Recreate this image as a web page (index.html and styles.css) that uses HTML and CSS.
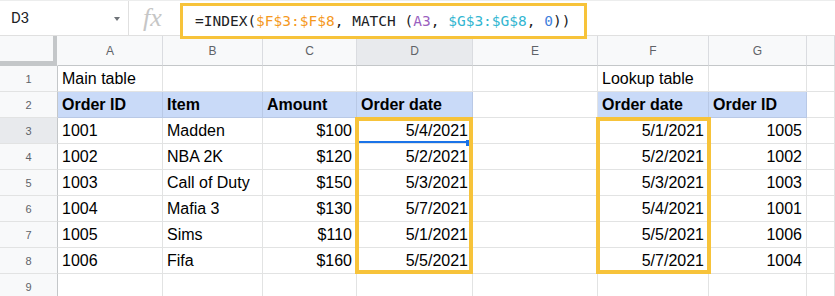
FILE: index.html
```html
<!DOCTYPE html>
<html lang="en">
<head>
  <meta charset="UTF-8" />
  <title>INDEX MATCH</title>
  <link rel="stylesheet" href="styles.css">
</head>
<body>

  <!-- formula bar -->
  <div class="formula-bar">
    <div class="name-box"><span>D3</span><span class="caret"></span></div>
    <div class="fx">fx</div>
    <div class="formula">=INDEX(<span class="ref-f">$F$3:$F$8</span>, MATCH (<span class="ref-a">A3</span>, <span class="ref-g">$G$3:$G$8</span>, <span class="num">0</span>))</div>
  </div>

  <!-- sheet -->
  <div class="sheet">
    <div class="grid">
      <div class="corner"></div>
      <div class="ch">A</div><div class="ch">B</div><div class="ch">C</div><div class="ch active">D</div>
      <div class="ch">E</div><div class="ch">F</div><div class="ch">G</div><div class="ch"></div>

      <div class="rh">1</div>
      <div class="c">Main table</div><div class="c"></div><div class="c"></div><div class="c"></div>
      <div class="c"></div><div class="c">Lookup table</div><div class="c"></div><div class="c"></div>

      <div class="rh">2</div>
      <div class="c hd">Order ID</div><div class="c hd">Item</div><div class="c hd">Amount</div><div class="c hd">Order date</div>
      <div class="c"></div><div class="c hd">Order date</div><div class="c hd">Order ID</div><div class="c"></div>

      <div class="rh active">3</div>
      <div class="c">1001</div><div class="c">Madden</div><div class="c r">$100</div><div class="c r">5/4/2021</div>
      <div class="c"></div><div class="c r">5/1/2021</div><div class="c r">1005</div><div class="c"></div>

      <div class="rh">4</div>
      <div class="c">1002</div><div class="c">NBA 2K</div><div class="c r">$120</div><div class="c r">5/2/2021</div>
      <div class="c"></div><div class="c r">5/2/2021</div><div class="c r">1002</div><div class="c"></div>

      <div class="rh">5</div>
      <div class="c">1003</div><div class="c">Call of Duty</div><div class="c r">$150</div><div class="c r">5/3/2021</div>
      <div class="c"></div><div class="c r">5/3/2021</div><div class="c r">1003</div><div class="c"></div>

      <div class="rh">6</div>
      <div class="c">1004</div><div class="c">Mafia 3</div><div class="c r">$130</div><div class="c r">5/7/2021</div>
      <div class="c"></div><div class="c r">5/4/2021</div><div class="c r">1001</div><div class="c"></div>

      <div class="rh">7</div>
      <div class="c">1005</div><div class="c">Sims</div><div class="c r">$110</div><div class="c r">5/1/2021</div>
      <div class="c"></div><div class="c r">5/5/2021</div><div class="c r">1006</div><div class="c"></div>

      <div class="rh">8</div>
      <div class="c">1006</div><div class="c">Fifa</div><div class="c r">$160</div><div class="c r">5/5/2021</div>
      <div class="c"></div><div class="c r">5/7/2021</div><div class="c r">1004</div><div class="c"></div>

      <div class="rh">9</div>
      <div class="c"></div><div class="c"></div><div class="c"></div><div class="c"></div>
      <div class="c"></div><div class="c"></div><div class="c"></div><div class="c"></div>
    </div>

    <!-- selection + highlight overlays -->
    <div class="sel-line"></div>
    <div class="sel-handle"></div>
    <div class="mark mark-d"></div>
    <div class="mark mark-f"></div>
  </div>

</body>
</html>
```

FILE: styles.css
```css
* { box-sizing: border-box; }
body {
  margin: 0;
  background: #fff;
  font-family: 'Liberation Sans', Arial, sans-serif;
  overflow: hidden;
}

/* formula bar */
.formula-bar {
  display: flex;
  height: 36px;
  border-top: 1px solid #eceded;
  border-bottom: 1px solid #e0e0e0;
}
.name-box {
  width: 129px;
  display: flex;
  align-items: center;
  justify-content: space-between;
  padding: 0 8px 0 11px;
  border-right: 1px solid #e0e0e0;
  font-family: Roboto, sans-serif;
  font-size: 15px;
  color: #202124;
}
.caret {
  width: 0;
  height: 0;
  border-left: 3.5px solid transparent;
  border-right: 3.5px solid transparent;
  border-top: 4px solid #6f7378;
  margin-top: 2px;
}
.fx {
  width: 51px;
  padding-left: 14px;
  display: flex;
  align-items: center;
  font-family: 'Liberation Serif', serif;
  font-style: italic;
  font-size: 26px;
  color: #c6c6c6;
}
.formula {
  position: relative;
  z-index: 2;
  width: 407px;
  height: 36px;
  margin: 2px 0 -3px 0;
  border: 3px solid #f7c33a;
  background: #fff;
  padding-left: 12px;
  display: flex;
  align-items: center;
  font-family: 'DejaVu Sans Mono', monospace;
  font-size: 14.5px;
  color: #202124;
  white-space: pre;
}
.ref-f { color: #f5991e; }
.ref-a { color: #9b5fc0; }
.ref-g { color: #33b6d1; }
.num { color: #3f7fdc; }

/* grid */
.sheet { position: relative; }
.grid {
  display: grid;
  grid-template-columns: 58px 105px 100px 94px 116px 125px 111px 98px 1fr;
  grid-template-rows: 30px repeat(9, 26px);
}
.grid > div {
  border-right: 1px solid #e2e3e3;
  border-bottom: 1px solid #e2e3e3;
  display: flex;
  align-items: center;
  white-space: nowrap;
  overflow: hidden;
}
.corner {
  background: #f8f9fa;
  box-shadow: inset -4px -4px 0 #c4c7c9;
}
.grid > .corner { border-right: 1px solid #f8f9fa; border-bottom: 1px solid #c4c7c9; }
.grid > .ch {
  background: #f8f9fa;
  justify-content: center;
  font-size: 12px;
  color: #5f6368;
  border-bottom: 1px solid #c4c7c9;
  border-right: 1px solid #dadce0;
}
.grid > .rh {
  background: #f8f9fa;
  justify-content: center;
  font-size: 11px;
  color: #5f6368;
  border-right: 1px solid #c4c7c9;
}
.grid > .active { background: #e8eaed; }
.c {
  padding: 1px 4px 0;
  font-size: 16px;
  color: #000;
}
.c.r { justify-content: flex-end; }
.grid > .hd {
  background: #c9daf8;
  font-weight: bold;
  border-right-color: #b9c9e6;
  border-bottom-color: #b9c9e6;
}

/* overlays */
.sel-line {
  position: absolute;
  left: 359px;
  top: 105px;
  width: 108px;
  height: 2px;
  background: #1a73e8;
}
.sel-handle {
  position: absolute;
  left: 466px;
  top: 104px;
  width: 5px;
  height: 6px;
  background: #1a73e8;
}
.mark {
  position: absolute;
  top: 81px;
  height: 157px;
  border: 4px solid #f7c33a;
}
.mark-d { left: 355px; width: 118px; }
.mark-f { left: 596px; width: 115px; }
```
